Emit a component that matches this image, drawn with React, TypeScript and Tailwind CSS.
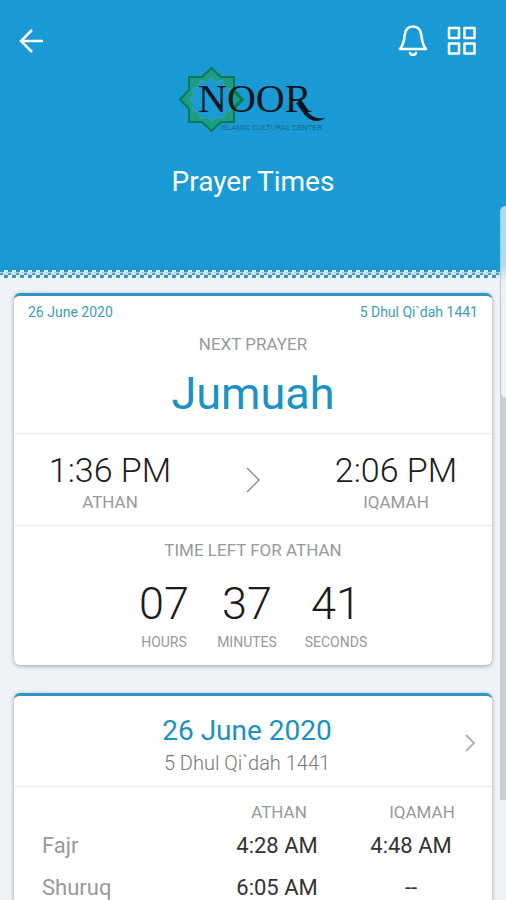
import { ReactNode } from "react";

const countdown = [
  { value: "07", label: "HOURS", width: "w-20" },
  { value: "37", label: "MINUTES", width: "w-[86px]" },
  { value: "41", label: "SECONDS", width: "w-[92px]" },
];

const prayers = [
  { name: "Fajr", athan: "4:28 AM", iqamah: "4:48 AM" },
  { name: "Shuruq", athan: "6:05 AM", iqamah: "--" },
];

function Logo() {
  return (
    <svg width="148" height="66" viewBox="0 0 148 66" role="img" aria-label="Noor Islamic Cultural Center">
      <path
        d="M10 11H23L32.500 2L42 11H55V24L64 33.500L55 43V56H42L32.500 65L23 56H10V43L1 33.500L10 24Z"
        fill="#1c9c84"
        stroke="#087a52"
        strokeWidth="2"
      />
      <path
        d="M32.500 11L37 16L43 14L46 21L52 23L50 29L55 33.500L50 38L52 44L46 46L43 53L37 51L32.500 56L28 51L22 53L19 46L13 44L15 38L10 33.500L15 29L13 23L19 21L22 14L28 16Z"
        fill="#1a9bd5"
        stroke="#35a59f"
        strokeWidth="1"
      />
      <path d="M54 25L63 33.500L54 42" fill="#1c9c84" stroke="#087a52" strokeWidth="2" />
      <text x="19" y="46" fontSize="40" fill="#07141b" fontFamily="'Liberation Serif', serif">
        NOOR
      </text>
      <path d="M121 36C128 47 134 54 146 52C138 58 130 54 125 48L117 37Z" fill="#07141b" />
      <text x="41" y="64" fontSize="8" fill="#175580" fontFamily="Roboto, sans-serif">
        ISLAMIC CULTURAL CENTER
      </text>
    </svg>
  );
}

function HeaderTexture() {
  return (
    <svg className="absolute inset-0 h-full w-full opacity-5" aria-hidden="true">
      <defs>
        <pattern id="stars" width="24" height="24" patternUnits="userSpaceOnUse">
          <g fill="none" stroke="#0b6fa8" strokeWidth="1">
            <rect x="6" y="6" width="12" height="12" />
            <rect x="6" y="6" width="12" height="12" transform="rotate(45 12 12)" />
            <path d="M0 12H4M20 12H24M12 0V4M12 20V24" />
          </g>
        </pattern>
      </defs>
      <rect width="100%" height="100%" fill="url(#stars)" />
    </svg>
  );
}

function LaceEdge() {
  return (
    <svg className="block h-3 w-full" aria-hidden="true">
      <defs>
        <pattern id="lace" width="8" height="12" patternUnits="userSpaceOnUse">
          <rect width="8" height="12" fill="#f0f3f7" />
          <rect width="8" height="2" fill="#1799d5" />
          <rect x="0" y="2" width="4" height="2" fill="#1f93c4" />
          <path d="M0 5L2 4L6 7L8 6M0 6L2 7L6 4L8 5" fill="none" stroke="#a3cdd6" strokeWidth="1" />
          <rect x="0" y="5" width="3" height="2" fill="#4ba3c4" />
          <rect x="4" y="7" width="4" height="3" rx="1" fill="#2495c2" />
        </pattern>
      </defs>
      <rect width="100%" height="12" fill="url(#lace)" />
    </svg>
  );
}

function Card({ children }: { children: ReactNode }) {
  return (
    <section className="rounded-md border-t-3 border-[#3096c2] bg-white shadow-[0_1px_4px_rgba(0,0,0,0.35)]">
      {children}
    </section>
  );
}

function Time({ value, label }: { value: string; label: string }) {
  return (
    <div className="flex w-48 flex-col items-center pt-1">
      <p className="text-[34px] leading-10 text-[#1c1c1c]">{value}</p>
      <p className="text-[17px] leading-6 font-normal text-[#999999]">{label}</p>
    </div>
  );
}

export default function App() {
  return (
    <div className="relative h-screen overflow-hidden bg-[#eff3f8] font-[Roboto,sans-serif] font-light">
      <header className="relative bg-[#1a9bd5]">
        <HeaderTexture />
        <div className="relative flex h-[268px] flex-col">
          <nav className="flex items-center justify-between px-[18px] pt-6">
            <button type="button" aria-label="Back" className="text-white">
              <svg width="26" height="32" viewBox="0 0 26 32" fill="none" stroke="currentColor" strokeWidth="2.5">
                <path d="M25 17H4M14 6L3 17L14 28" />
              </svg>
            </button>
            <div className="flex items-center gap-4 pr-2.5">
              <button type="button" aria-label="Notifications" className="text-white">
                <svg width="32" height="32" viewBox="0 0 32 32" fill="none" stroke="currentColor" strokeWidth="2.5" strokeLinejoin="round" strokeLinecap="round">
                  <path d="M2 25C6 20 6 17 6.500 12C7 6 10 2.500 15 2.500S23 6 23.500 12C24 17 24 20 28 25Z" />
                  <path d="M12 29C13 31.500 17 31.500 18 29" />
                </svg>
              </button>
              <button type="button" aria-label="Menu" className="text-white">
                <svg width="32" height="32" viewBox="0 0 32 32" fill="none" stroke="currentColor" strokeWidth="2.500" strokeLinejoin="round">
                  <path d="M3 4H13V14H3ZM18.500 4H28.500V14H18.500ZM3 19.500H13V29.500H3ZM18.500 19.500H28.500V29.500H18.500Z" />
                </svg>
              </button>
            </div>
          </nav>
          <div className="flex flex-col items-center pt-2.5">
            <Logo />
            <h1 className="pt-[30px] text-[28px] leading-10 font-normal text-white">Prayer Times</h1>
          </div>
        </div>
        <LaceEdge />
      </header>

      <main className="flex flex-col gap-7 px-[14px] pt-[13px]">
        <Card>
          <div className="flex justify-between px-[14px] pt-1.5 text-sm leading-5 font-normal text-[#3d9eb5]">
            <span>26 June 2020</span>
            <span>5 Dhul Qi`dah 1441</span>
          </div>
          <div className="flex h-28 flex-col items-center border-b border-[#eeeeee] pt-2.5">
            <p className="text-[17px] leading-6 font-normal text-[#999999]">NEXT PRAYER</p>
            <h2 className="pt-2.5 text-[45px] leading-14 font-normal text-[#1a92c4]">Jumuah</h2>
          </div>
          <div className="flex h-[92px] items-center justify-between border-b border-[#eeeeee]">
            <Time value="1:36 PM" label="ATHAN" />
            <svg width="16" height="28" viewBox="0 0 16 28" fill="none" stroke="#8e8e8e" strokeWidth="1.5" aria-hidden="true">
              <path d="M2 2L14 14L2 26" />
            </svg>
            <Time value="2:06 PM" label="IQAMAH" />
          </div>
          <div className="flex h-[139px] flex-col items-center pt-3">
            <p className="text-[17px] leading-6 font-normal text-[#999999]">TIME LEFT FOR ATHAN</p>
            <div className="flex pt-[18px]">
              {countdown.map((unit) => (
                <div key={unit.label} className={`flex flex-col items-center ${unit.width}`}>
                  <span className="text-[45px] leading-12 text-[#1c1c1c]">{unit.value}</span>
                  <span className="pt-1 text-sm leading-5 font-normal text-[#999999]">{unit.label}</span>
                </div>
              ))}
            </div>
          </div>
        </Card>

        <Card>
          <div className="flex h-[91px] items-center border-b border-[#eeeeee] px-4 pt-1">
            <div className="flex grow flex-col items-center pt-1">
              <h2 className="text-[28px] leading-9 font-normal text-[#1a92c4]">26 June 2020</h2>
              <p className="text-xl leading-7 text-[#777777]">5 Dhul Qi`dah 1441</p>
            </div>
            <button type="button" aria-label="Next day">
              <svg width="12" height="20" viewBox="0 0 12 20" fill="none" stroke="#b3b3b3" strokeWidth="2">
                <path d="M2 2L10 10L2 18" />
              </svg>
            </button>
          </div>
          <table className="mt-3 w-full table-fixed">
            <thead>
              <tr className="h-[26px] text-[17px] leading-6 text-[#999999]">
                <th aria-label="Prayer" />
                <th className="w-[134px] pl-1 font-normal">ATHAN</th>
                <th className="w-[148px] pl-2 font-normal">IQAMAH</th>
              </tr>
            </thead>
            <tbody>
              {prayers.map((prayer) => (
                <tr key={prayer.name} className="h-[42px] text-[22px] leading-8 font-normal text-[#333333]">
                  <th scope="row" className="pl-7 text-left font-normal text-[#999999]">{prayer.name}</th>
                  <td className="text-center">{prayer.athan}</td>
                  <td className="pr-3.5 text-center">{prayer.iqamah}</td>
                </tr>
              ))}
            </tbody>
          </table>
        </Card>
      </main>

      <div className="absolute top-[206px] right-0 h-[594px] w-[6px] rounded-tl-md bg-[#c9cfd5]" aria-hidden="true">
        <div className="h-48 rounded-l-md border-l border-[#b9c7d1] bg-linear-to-b from-[#a9dcf2] from-30% to-[#eef1f6] to-40%" />
      </div>
    </div>
  );
}
